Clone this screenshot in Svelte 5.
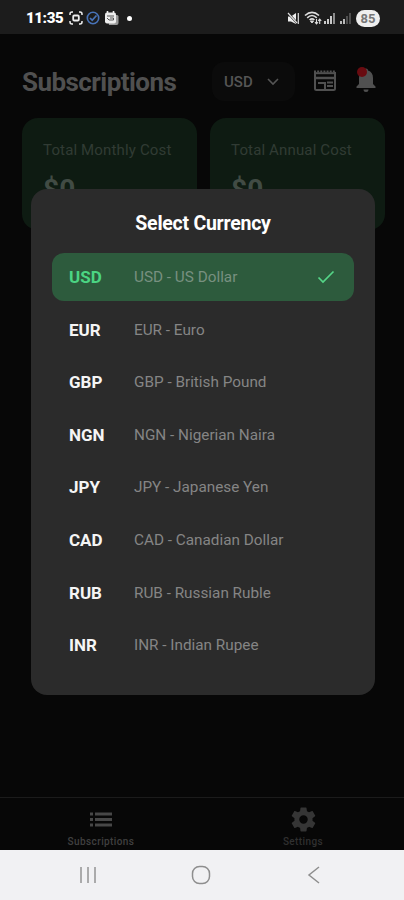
<script>
  const currencies = [
    { code: "USD", name: "US Dollar" },
    { code: "EUR", name: "Euro" },
    { code: "GBP", name: "British Pound" },
    { code: "NGN", name: "Nigerian Naira" },
    { code: "JPY", name: "Japanese Yen" },
    { code: "CAD", name: "Canadian Dollar" },
    { code: "RUB", name: "Russian Ruble" },
    { code: "INR", name: "Indian Rupee" },
  ];
  const totals = ["Total Monthly Cost", "Total Annual Cost"];
  let selected = $state("USD");
</script>

<div class="phone">
  <div class="status">
    <span class="time">11:35</span>
    <svg class="capture" width="14" height="14" viewBox="0 0 14 14" fill="none" stroke="#eee" stroke-width="1.5">
      <path d="M1 4V3a2 2 0 0 1 2-2h1M10 1h1a2 2 0 0 1 2 2v1M13 10v1a2 2 0 0 1-2 2h-1M4 13H3a2 2 0 0 1-2-2v-1" />
      <rect x="4.2" y="4.5" width="5.6" height="5" rx="1" stroke-width="1.8" />
    </svg>
    <svg class="verified" width="14" height="14" viewBox="0 0 14 14" fill="none" stroke="#4873b8">
      <circle cx="7" cy="7" r="5.7" stroke-width="1.6" />
      <path d="M4 7l2.2 2.2L10.5 4.5" stroke-width="1.7" />
    </svg>
    <svg class="calendar" width="15" height="14" viewBox="0 0 15 14">
      <path d="M4 4h9a1.5 1.5 0 0 1 1.5 1.5V12a2 2 0 0 1-2 2H5z" fill="#999" />
      <rect x="1" y="1.5" width="11" height="11" rx="2" fill="#eee" />
      <path d="M3.5 0v3M9.5 0v3" stroke="#eee" stroke-width="1.6" />
      <path d="M3 5h7M3 7l2 2h4.5V7H6" stroke="#555" fill="none" />
    </svg>
    <span class="dot"></span>
    <svg class="mute" width="13" height="13" viewBox="0 0 13 13">
      <path d="M1 4.500h3L9 1v11L4 9.500H1z" fill="#eee" />
      <path d="M1 1l9 10" stroke="#1c1c1c" stroke-width="2.200" />
      <path d="M1 1l9 10M11.300 1v11" stroke="#ddd" stroke-width="1.200" />
    </svg>
    <svg class="wifi" width="18" height="14" viewBox="0 0 18 14" fill="none" stroke="#ddd">
      <path d="M1 4.5Q8-1.8 15 4.5M3.2 6.8Q8 2.2 12.8 6.8M5.6 9Q8 6.8 10.4 9" stroke-width="1.6" />
      <path d="M6.5 10h3L8 12z" fill="#ddd" />
      <path d="M12.5 8v5M11 11.2l1.5 1.8 1.5-1.8M15.7 13V8M14.2 9.8L15.7 8l1.5 1.8" stroke-width="1.1" />
    </svg>
    <svg class="signal" width="11" height="11" viewBox="0 0 11 11" stroke="#ddd" stroke-width="1.8">
      <path d="M1 11V8M4 11V6M7 11V3" />
      <path d="M10 11V0" stroke="#999" />
    </svg>
    <svg class="signal" width="11" height="11" viewBox="0 0 11 11" stroke="#ccc" stroke-width="1.8">
      <path d="M1 11V8M4 11V6" />
      <path d="M7 11V3M10 11V0" stroke="#555" />
    </svg>
    <span class="battery">85</span>
  </div>

  <main>
    <header>
      <h1>Subscriptions</h1>
      <button class="picker">
        USD
        <svg width="12" height="8" viewBox="0 0 12 8" fill="none" stroke="#555" stroke-width="1.6">
          <path d="M1 1l5 5 5-5" />
        </svg>
      </button>
      <svg class="news" width="24" height="22" viewBox="0 0 24 22" fill="none" stroke="#505050" stroke-width="2">
        <path d="M2 2v16.500a1.500 1.500 0 0 0 1.500 1.500h17a1.500 1.500 0 0 0 1.500-1.500V2" />
        <path d="M1 1.500h22" stroke-width="2" stroke-dasharray="2 1.140" />
        <path d="M1 3.200h22" stroke-width="2" />
        <path d="M2 8h20" stroke-width="2.500" />
        <path d="M5 13h6M12 12v8M14 12.5h6M14 16h6" />
      </svg>
      <div class="bell">
        <svg width="20" height="25" viewBox="0 0 20 25" fill="#505050">
          <path d="M10 1.5a2 2 0 0 1 2 2c3.3 1 5 3.7 5 7.5v6l2.5 2.5V21H.5v-1.5L3 17v-6c0-3.8 1.7-6.500 5-7.500a2 2 0 0 1 2-2zM7.500 22.500h5a2.500 2.500 0 0 1-5 0z" />
        </svg>
        <span class="badge"></span>
      </div>
    </header>
    <section class="totals">
      {#each totals as label}
        <div class="card">
          <p>{label}</p>
          <strong>$0</strong>
        </div>
      {/each}
    </section>
  </main>

  <nav class="tabs">
    <div class="tab active">
      <svg width="24" height="26" viewBox="0 0 24 26" fill="#474747">
        <path d="M1 6h3v3H1zM1 11.500h3v3H1zM1 17h3v3H1zM6 6h17v3H6zM6 11.500h17v3H6zM6 17h17v3H6z" />
      </svg>
      <span>Subscriptions</span>
    </div>
    <div class="tab">
      <svg width="29" height="29" viewBox="0 0 24 24" fill="#353535">
        <path d="M19.430 12.980c.04-.32.07-.64.07-.98s-.03-.66-.07-.98l2.110-1.650c.19-.15.24-.42.12-.64l-2-3.460c-.12-.22-.39-.3-.61-.22l-2.490 1c-.52-.4-1.080-.73-1.690-.98l-.38-2.650A.488.488 0 0 0 14 2h-4c-.25 0-.46.18-.49.42l-.38 2.650c-.61.25-1.170.59-1.690.98l-2.490-1c-.23-.09-.49 0-.61.22l-2 3.460c-.13.22-.07.49.12.64l2.110 1.650c-.04.32-.07.65-.07.98s.03.66.07.98l-2.110 1.650c-.19.15-.24.42-.12.64l2 3.460c.12.22.39.3.61.22l2.490-1c.52.4 1.080.73 1.690.98l.38 2.650c.03.24.24.42.49.42h4c.25 0 .46-.18.49-.42l.38-2.650c.61-.25 1.170-.59 1.690-.98l2.490 1c.23.09.49 0 .61-.22l2-3.460c.12-.22.07-.49-.12-.64zM12 15.500A3.500 3.500 0 1 1 12 8.500a3.500 3.500 0 0 1 0 7z" />
      </svg>
      <span>Settings</span>
    </div>
  </nav>

  <div class="system">
    <svg width="18" height="18" viewBox="0 0 18 18" stroke="#999" stroke-width="1.600">
      <path d="M2 1v16M9 1v16M16 1v16" />
    </svg>
    <svg width="20" height="20" viewBox="0 0 20 20" fill="none" stroke="#8e8e8e" stroke-width="1.500">
      <rect x="1.500" y="1.500" width="17" height="17" rx="7" />
    </svg>
    <svg width="18" height="18" viewBox="0 0 18 18" fill="none" stroke="#8e8e8e" stroke-width="1.500">
      <path d="M14 1L4 9l10 8" />
    </svg>
  </div>

  <div class="modal" role="dialog">
    <h2>Select Currency</h2>
    <div class="list">
      {#each currencies as { code, name }}
        <button class="row" class:selected={code === selected} onclick={() => (selected = code)}>
          <span class="code">{code}</span>
          <span class="name">{code} - {name}</span>
          {#if code === selected}
            <svg width="18" height="14" viewBox="0 0 18 14" fill="none" stroke="#55d587" stroke-width="1.700">
              <path d="M1.500 7.500l4.500 4.500L16.500 1.500" />
            </svg>
          {/if}
        </button>
      {/each}
    </div>
  </div>
</div>

<style>
  :global(body) {
    background: #070707;
  }
  .phone {
    position: relative;
    display: flex;
    flex-direction: column;
    width: 404px;
    height: 900px;
    overflow: hidden;
    background: #070707;
    font-family: Roboto, "Liberation Sans", sans-serif;
  }
  svg {
    display: block;
    flex: none;
  }
  button {
    border: 0;
    font-family: inherit;
    cursor: pointer;
  }
  h1,
  h2,
  p {
    margin: 0;
  }
  .status {
    display: flex;
    align-items: center;
    flex: none;
    height: 34px;
    box-sizing: border-box;
    padding: 2px 24px 0 26px;
    background: #1c1c1c;
  }
  .time {
    width: 43px;
    color: #fff;
    font-size: 15px;
    font-weight: 900;
    letter-spacing: -0.4px;
  }
  .verified {
    margin-left: 3px;
  }
  .calendar {
    margin-left: 4px;
  }
  .dot {
    width: 5px;
    height: 5px;
    margin-left: 8px;
    border-radius: 50%;
    background: #fff;
  }
  .mute {
    margin-left: auto;
  }
  .wifi {
    margin-left: 4px;
  }
  .signal {
    margin-left: 2px;
  }
  .signal + .signal {
    margin-left: 5px;
  }
  .battery {
    width: 24px;
    margin-left: 5px;
    border-radius: 9px;
    background: #eee;
    color: #777;
    font-size: 13px;
    font-weight: 700;
    line-height: 17px;
    text-align: center;
  }
  main {
    flex: 1;
    padding: 0 19px 0 22px;
  }
  header {
    display: flex;
    align-items: center;
    height: 84px;
  }
  h1 {
    width: 190px;
    padding-top: 11px;
    color: #505050;
    font-size: 26px;
    font-weight: 700;
    letter-spacing: -0.55px;
  }
  .picker {
    display: flex;
    align-items: center;
    gap: 14px;
    width: 83px;
    height: 39px;
    margin-top: 11px;
    padding: 0 12px;
    border-radius: 12px;
    background: #0b0b0b;
    color: #555;
    font-size: 15px;
    font-weight: 500;
  }
  .news {
    margin: 10px 0 0 18px;
  }
  .bell {
    position: relative;
    margin: 6px 0 0 19px;
  }
  .badge {
    position: absolute;
    top: 0;
    left: 1px;
    width: 10px;
    height: 10px;
    border-radius: 50%;
    background: #690b10;
  }
  .totals {
    display: flex;
    gap: 13px;
  }
  .card {
    flex: 1;
    height: 112px;
    box-sizing: border-box;
    padding: 23px 0 0 21px;
    border-radius: 16px;
    background: #0e1b12;
    color: #313b34;
    font-size: 15px;
    letter-spacing: 0.15px;
  }
  .card p {
    line-height: 18px;
    white-space: nowrap;
  }
  .card strong {
    display: block;
    margin-top: 15px;
    color: #414b44;
    font-size: 28px;
    line-height: 32px;
  }
  .tabs {
    display: flex;
    height: 53px;
    box-sizing: border-box;
    border-top: 1px solid #1b1b1b;
  }
  .tab {
    display: flex;
    flex: 1;
    flex-direction: column;
    align-items: center;
    color: #303030;
    font-size: 10px;
    font-weight: 500;
  }
  .tab svg {
    height: 29px;
    margin-top: 7px;
  }
  .tab span {
    line-height: 14px;
    margin-top: 1px;
    letter-spacing: 0.4px;
  }
  .active {
    color: #404040;
  }
  .system {
    display: flex;
    align-items: center;
    justify-content: center;
    gap: 94px;
    height: 50px;
    padding-right: 2px;
    background: #f1f1f3;
  }
  .modal {
    position: absolute;
    top: 189px;
    left: 31px;
    width: 344px;
    height: 506px;
    box-sizing: border-box;
    padding: 23px 21px 22px;
    border-radius: 16px;
    background: #2b2b2b;
  }
  h2 {
    color: #fff;
    font-size: 19.5px;
    font-weight: 700;
    line-height: 24px;
    letter-spacing: -0.25px;
    text-align: center;
  }
  .list {
    display: flex;
    flex-direction: column;
    gap: 4.6px;
    margin-top: 17px;
  }
  .row {
    display: flex;
    align-items: center;
    height: 48px;
    padding: 0 19px 0 17px;
    border-radius: 12px;
    background: none;
    color: #858585;
    font-size: 15.3px;
    text-align: left;
  }
  .selected {
    background: #2d5b3d;
    color: #789080;
  }
  .code {
    width: 65px;
    color: #f5f5f5;
    font-size: 17px;
    font-weight: 700;
  }
  .selected .code {
    color: #4bd583;
  }
  .name {
    flex: 1;
  }
</style>
